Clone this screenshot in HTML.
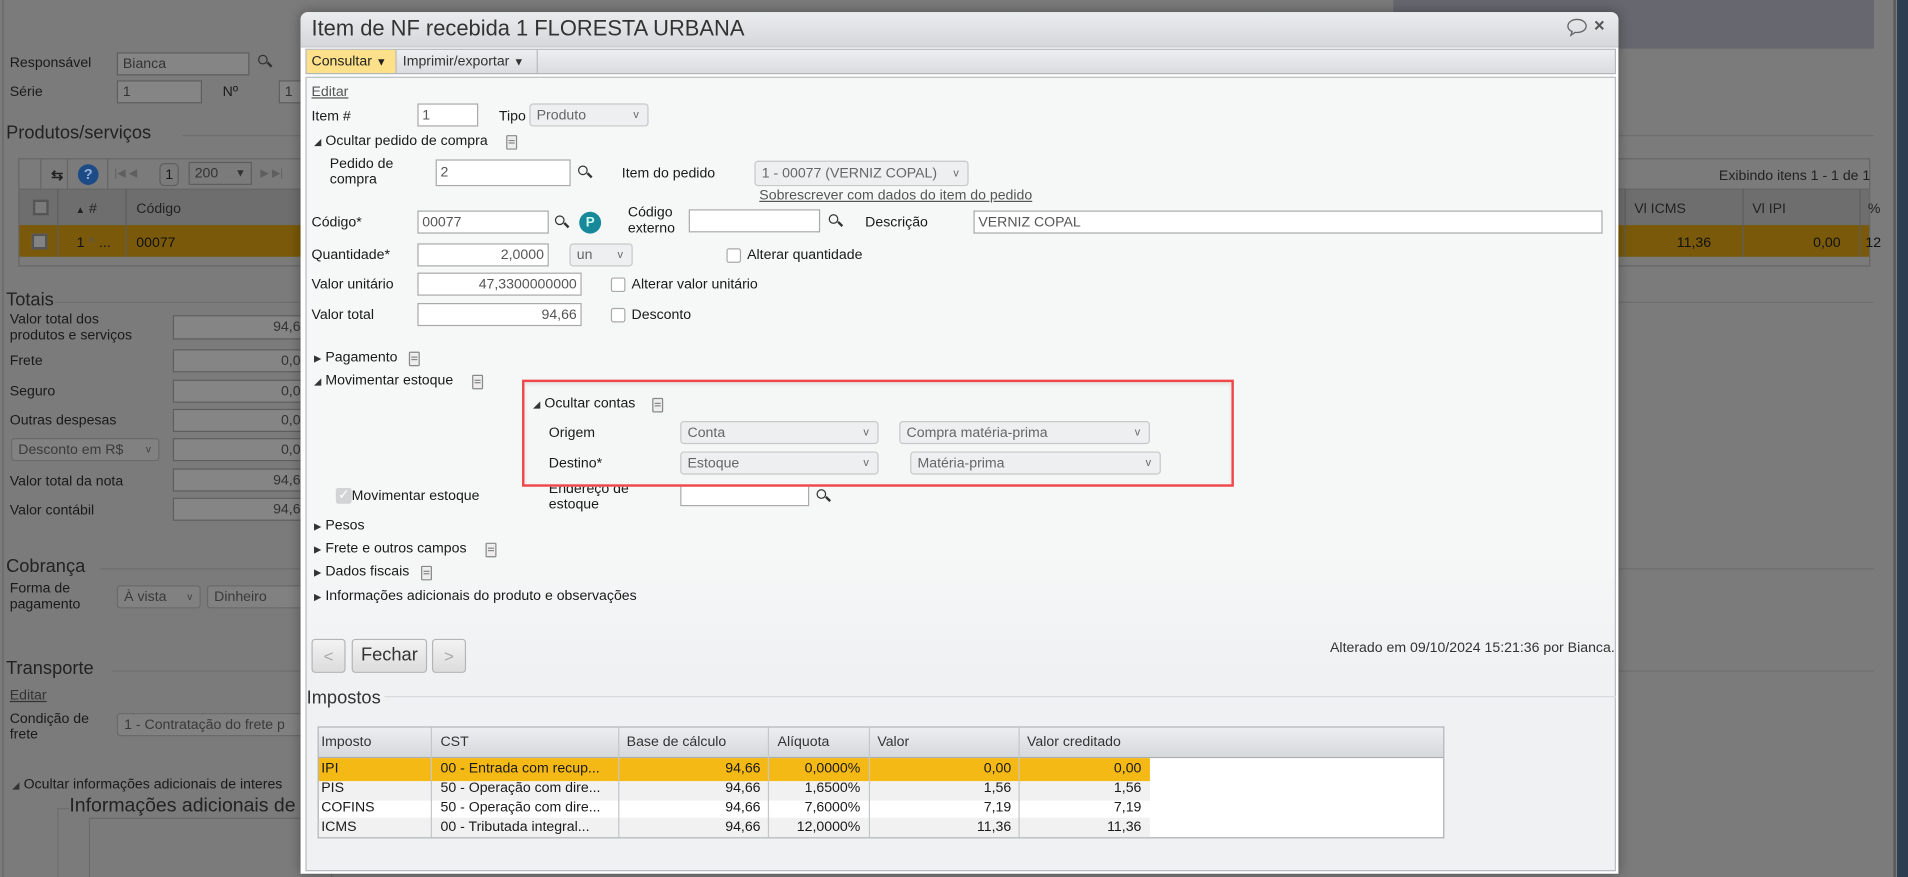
<!DOCTYPE html>
<html><head><meta charset="utf-8">
<style>
html,body{margin:0;padding:0;width:1908px;height:877px;overflow:hidden;background:#7b7b7b}
#w{position:absolute;left:0;top:0;width:1568px;height:721px;transform:scale(1.21684);transform-origin:0 0;font-family:"Liberation Sans",sans-serif;font-size:11.6px;color:#1a1a1a;background:#7b7b7b;overflow:hidden}
.a{position:absolute;white-space:nowrap}
.bin{position:absolute;box-sizing:border-box;background:#858585;border:1px solid #5e5e5e;color:#333;padding:0 4px;line-height:17px;font-size:11.6px;white-space:nowrap;overflow:hidden}
.bsel{position:absolute;box-sizing:border-box;background:#818181;border:1px solid #6a6a6a;border-radius:3px;color:#3a3a3a;padding:0 5px;line-height:17px;font-size:11.6px;white-space:nowrap;overflow:hidden}
.in{position:absolute;box-sizing:border-box;background:#fff;border:1px solid #aaa;color:#555;padding:0 3px;line-height:17px;font-size:11.6px;white-space:nowrap;overflow:hidden;height:19px}
.r{text-align:right}
.sel{position:absolute;box-sizing:border-box;background:#eeeff0;border:1px solid #c8c8c8;border-radius:3px;color:#666;padding:0 5px;line-height:17px;font-size:11.6px;white-space:nowrap;height:19px}
.sel:after{content:"v";position:absolute;right:7px;top:0;font-size:9px;color:#666}
.cb{position:absolute;width:12px;height:12px;box-sizing:border-box;border:1px solid #aaa;border-radius:2px;background:#fff}
.doc{position:absolute;width:7px;height:10px;border:1px solid #888;border-radius:1px;background:#eee}
.doc:before{content:"";position:absolute;left:1px;top:3px;width:5px;height:1px;background:#888;box-shadow:0 2px 0 #888}
.tri{font-size:8px;color:#333}
.lens{position:absolute;width:6px;height:6px;border:1.5px solid #333;border-radius:50%}
.lens:after{content:"";position:absolute;left:6px;top:6px;width:2px;height:5px;background:#333;transform:rotate(-45deg);transform-origin:0 0}
.sect{font-size:15px;color:#222}
.btn{position:absolute;box-sizing:border-box;border:1px solid #b5b5b5;border-radius:3px;background:linear-gradient(#f3f3f3,#dcdcdc);text-align:center;color:#333}
</style></head><body><div id="w">
<div class="a" style="left:1145px;top:0;width:395px;height:40px;background:#67676f"></div>
<div class="a" style="left:1556px;top:0;width:2px;height:721px;background:#5a5a5a"></div>
<div class="a" style="left:1559px;top:0;width:9px;height:721px;background:#2e3d52"></div>
<div class="a" style="left:2px;top:0;width:1px;height:721px;background:#666"></div>

<div class="a" style="left:8px;top:45px">Responsável</div>
<div class="bin" style="left:96px;top:43px;width:109px;height:19px">Bianca</div>
<div class="lens" style="left:212px;top:45px"></div>
<div class="a" style="left:8px;top:69px">Série</div>
<div class="bin" style="left:96px;top:66px;width:70px;height:19px">1</div>
<div class="a" style="left:183px;top:69px">Nº</div>
<div class="bin" style="left:229px;top:66px;width:30px;height:19px">1</div>

<div class="a sect" style="left:5px;top:101px">Produtos/serviços</div>
<div class="a" style="left:150px;top:111px;width:1390px;height:1px;background:#6e6e6e"></div>
<div class="a" style="left:15px;top:130px;width:1522px;height:89px;border:1px solid #666;box-sizing:border-box;background:#7b7b7b"></div>
<div class="a" style="left:33px;top:131px;width:1px;height:24px;background:#666"></div>
<div class="a" style="left:42px;top:137px;font-size:12px;font-weight:bold;color:#222">⇆</div>
<div class="a" style="left:55px;top:131px;width:1px;height:24px;background:#666"></div>
<div class="a" style="left:64px;top:135px;width:17px;height:17px;border-radius:50%;background:#1d4b86;color:#8fb0d8;font-weight:bold;text-align:center;font-size:12px;line-height:17px">?</div>
<div class="a" style="left:88px;top:131px;width:1px;height:24px;background:#666"></div>
<div class="a" style="left:94px;top:137px;color:#5f5f5f;font-size:9px">|◀ ◀</div>
<div class="a" style="left:131px;top:134px;width:16px;height:19px;border:1px solid #5f5f5f;border-radius:4px;box-sizing:border-box;text-align:center;line-height:17px">1</div>
<div class="bin" style="left:155px;top:133px;width:52px;height:19px;background:#7b7b7b">200 <span style="position:absolute;right:4px;font-size:9px">▼</span></div>
<div class="a" style="left:214px;top:137px;color:#5f5f5f;font-size:9px">▶ ▶|</div>
<div class="a" style="right:31px;top:138px;color:#222">Exibindo itens 1 - 1 de 1</div>
<div class="a" style="left:16px;top:155px;width:1520px;height:30px;background:#6e6e6e;border-top:1px solid #666"></div>
<div class="a" style="left:47px;top:155px;width:1px;height:56px;background:#5e5e5e"></div>
<div class="a" style="left:103px;top:155px;width:1px;height:56px;background:#5e5e5e"></div>
<div class="a" style="left:1335px;top:155px;width:1px;height:56px;background:#5e5e5e"></div>
<div class="a" style="left:1432px;top:155px;width:1px;height:56px;background:#5e5e5e"></div>
<div class="a" style="left:1528px;top:155px;width:1px;height:56px;background:#5e5e5e"></div>
<div class="a" style="left:27px;top:164px;width:13px;height:13px;border:2px solid #555;box-sizing:border-box;background:#7b7b7b"></div>
<div class="a" style="left:62px;top:165px;color:#222"><span style="font-size:8px">▲</span> #</div>
<div class="a" style="left:112px;top:165px;color:#222">Código</div>
<div class="a" style="left:1343px;top:165px;color:#222">Vl ICMS</div>
<div class="a" style="left:1440px;top:165px;color:#222">Vl IPI</div>
<div class="a" style="left:1535px;top:165px;color:#222">%</div>
<div class="a" style="left:16px;top:185px;width:1520px;height:26px;background:#7a5a0a"></div>
<div class="a" style="left:47px;top:185px;width:1px;height:26px;background:#5e5e5e"></div>
<div class="a" style="left:103px;top:185px;width:1px;height:26px;background:#5e5e5e"></div>
<div class="a" style="left:1335px;top:185px;width:1px;height:26px;background:#5e5e5e"></div>
<div class="a" style="left:1432px;top:185px;width:1px;height:26px;background:#5e5e5e"></div>
<div class="a" style="left:1528px;top:185px;width:1px;height:26px;background:#5e5e5e"></div>
<div class="a" style="left:26px;top:192px;width:13px;height:13px;border:2px solid #555;box-sizing:border-box;background:#838383"></div>
<div class="a" style="left:63px;top:193px;color:#111">1 <span style="color:#555">^</span> ...</div>
<div class="a" style="left:112px;top:193px;color:#111">00077</div>
<div class="a" style="left:1378px;top:193px;color:#111">11,36</div>
<div class="a" style="left:1490px;top:193px;color:#111">0,00</div>
<div class="a" style="left:1533px;top:193px;color:#111">12</div>

<div class="a sect" style="left:5px;top:238px">Totais</div>
<div class="a" style="left:45px;top:248px;width:1495px;height:1px;background:#6e6e6e"></div>
<div class="a" style="left:8px;top:256px;line-height:13px">Valor total dos<br>produtos e serviços</div>
<div class="bin r" style="left:142px;top:259px;width:110px;height:20px">94,6</div>
<div class="a" style="left:8px;top:290px">Frete</div>
<div class="bin r" style="left:142px;top:287px;width:110px;height:19px">0,0</div>
<div class="a" style="left:8px;top:315px">Seguro</div>
<div class="bin r" style="left:142px;top:312px;width:110px;height:19px">0,0</div>
<div class="a" style="left:8px;top:339px">Outras despesas</div>
<div class="bin r" style="left:142px;top:336px;width:110px;height:19px">0,0</div>
<div class="bsel" style="left:9px;top:360px;width:122px;height:19px">Desconto em R$ <span style="position:absolute;right:6px;font-size:8px">v</span></div>
<div class="bin r" style="left:142px;top:360px;width:110px;height:19px">0,0</div>
<div class="a" style="left:8px;top:389px">Valor total da nota</div>
<div class="bin r" style="left:142px;top:385px;width:110px;height:19px">94,6</div>
<div class="a" style="left:8px;top:413px">Valor contábil</div>
<div class="bin r" style="left:142px;top:409px;width:110px;height:19px">94,6</div>

<div class="a sect" style="left:5px;top:457px">Cobrança</div>
<div class="a" style="left:82px;top:467px;width:1458px;height:1px;background:#6e6e6e"></div>
<div class="a" style="left:8px;top:477px;line-height:13px">Forma de<br>pagamento</div>
<div class="bsel" style="left:96px;top:481px;width:69px;height:19px">À vista <span style="position:absolute;right:6px;font-size:8px">v</span></div>
<div class="bsel" style="left:170px;top:481px;width:90px;height:19px">Dinheiro</div>

<div class="a sect" style="left:5px;top:541px">Transporte</div>
<div class="a" style="left:92px;top:551px;width:1448px;height:1px;background:#6e6e6e"></div>
<div class="a" style="left:8px;top:565px;text-decoration:underline;color:#333">Editar</div>
<div class="a" style="left:8px;top:584px;line-height:13px">Condição de<br>frete</div>
<div class="bsel" style="left:96px;top:586px;width:170px;height:19px">1 - Contratação do frete p</div>
<div class="a" style="left:10px;top:638px"><span class="tri">◢</span> Ocultar informações adicionais de interes</div>
<div class="a" style="left:47px;top:664px;width:1px;height:60px;background:#6e6e6e"></div>
<div class="a" style="left:47px;top:664px;width:10px;height:1px;background:#6e6e6e"></div>
<div class="a" style="left:57px;top:654px;font-size:16px;color:#222">Informações adicionais de in</div>
<div class="a" style="left:73px;top:672px;width:200px;height:60px;border:1px solid #6a6a6a;box-sizing:border-box"></div>

<!-- modal -->
<div class="a" style="left:247px;top:10px;width:1083px;height:708px;background:#fff;border-radius:6px 6px 0 0;box-shadow:0 0 10px rgba(0,0,0,.35)"></div>
<div class="a" style="left:247px;top:10px;width:1083px;height:28px;background:linear-gradient(#ebecee,#d5d7da);border-radius:6px 6px 0 0;border-bottom:1px solid #b9bcc0"></div>
<div class="a" style="left:256px;top:13px;font-size:18px;color:#333">Item de NF recebida 1 FLORESTA URBANA</div>
<svg class="a" style="left:1286px;top:14px" width="20" height="17" viewBox="0 0 20 17"><path d="M10 2C5.5 2 2.5 4.6 2.5 7.5c0 2 1.4 3.6 3.4 4.4L5 15l3.4-2.4c.5.1 1 .1 1.6.1 4.5 0 7.5-2.4 7.5-5.3S14.5 2 10 2z" fill="none" stroke="#666" stroke-width="1.1"/></svg>
<div class="a" style="left:1310px;top:13px;font-size:15px;font-weight:bold;color:#555">×</div>
<div class="a" style="left:251px;top:40px;width:1077px;height:21px;box-sizing:border-box;border:1px solid #b3b6ba;background:linear-gradient(#eceef0,#dadcdf)"></div>
<div class="a" style="left:252px;top:41px;width:73px;height:19px;background:#fde18a"></div>
<div class="a" style="left:256px;top:44px;color:#222">Consultar <span style="font-size:9px">▼</span></div>
<div class="a" style="left:325px;top:41px;width:1px;height:19px;background:#bbb"></div>
<div class="a" style="left:331px;top:44px;color:#333">Imprimir/exportar <span style="font-size:9px">▼</span></div>
<div class="a" style="left:441px;top:41px;width:1px;height:19px;background:#bbb"></div>

<div class="a" style="left:251px;top:63px;width:1077px;height:653px;box-sizing:border-box;border:1px solid #b8bbbf;background:linear-gradient(#f6f7f7 0%,#f6f7f7 60%,#f0f1f3 75%,#f0f1f3 100%)"></div>
<div class="a" style="left:256px;top:69px;text-decoration:underline;color:#555">Editar</div>
<div class="a" style="left:256px;top:89px">Item #</div>
<div class="in" style="left:343px;top:85px;width:50px">1</div>
<div class="a" style="left:410px;top:89px">Tipo</div>
<div class="sel" style="left:435px;top:85px;width:98px">Produto</div>
<div class="a" style="left:258px;top:109px"><span class="tri">◢</span> Ocultar pedido de compra</div>
<div class="doc" style="left:416px;top:111px"></div>
<div class="a" style="left:271px;top:128px;line-height:13px">Pedido de<br>compra</div>
<div class="in" style="left:358px;top:131px;width:111px;height:22px;line-height:20px">2</div>
<div class="lens" style="left:475px;top:136px"></div>
<div class="a" style="left:511px;top:136px">Item do pedido</div>
<div class="sel" style="left:620px;top:132px;width:176px;height:21px;line-height:19px">1 - 00077 (VERNIZ COPAL)</div>
<div class="a" style="left:624px;top:154px;text-decoration:underline;color:#555">Sobrescrever com dados do item do pedido</div>

<div class="a" style="left:256px;top:176px">Código*</div>
<div class="in" style="left:343px;top:173px;width:108px">00077</div>
<div class="lens" style="left:456px;top:177px"></div>
<div class="a" style="left:476px;top:174px;width:18px;height:18px;border-radius:50%;background:#17899a;color:#cfe;text-align:center;font-size:11px;line-height:18px;font-weight:bold">P</div>
<div class="a" style="left:516px;top:168px;line-height:13px">Código<br>externo</div>
<div class="in" style="left:566px;top:172px;width:108px">&nbsp;</div>
<div class="lens" style="left:681px;top:176px"></div>
<div class="a" style="left:711px;top:176px">Descrição</div>
<div class="in" style="left:800px;top:173px;width:517px">VERNIZ COPAL</div>

<div class="a" style="left:256px;top:203px">Quantidade*</div>
<div class="in r" style="left:343px;top:200px;width:108px">2,0000</div>
<div class="sel" style="left:468px;top:200px;width:52px">un</div>
<div class="cb" style="left:597px;top:204px"></div>
<div class="a" style="left:614px;top:203px">Alterar quantidade</div>
<div class="a" style="left:256px;top:227px">Valor unitário</div>
<div class="in r" style="left:343px;top:224px;width:135px">47,3300000000</div>
<div class="cb" style="left:502px;top:228px"></div>
<div class="a" style="left:519px;top:227px">Alterar valor unitário</div>
<div class="a" style="left:256px;top:252px">Valor total</div>
<div class="in r" style="left:343px;top:249px;width:135px">94,66</div>
<div class="cb" style="left:502px;top:253px"></div>
<div class="a" style="left:519px;top:252px">Desconto</div>

<div class="a" style="left:258px;top:287px"><span class="tri">▶</span> Pagamento</div>
<div class="doc" style="left:336px;top:289px"></div>
<div class="a" style="left:258px;top:306px"><span class="tri">◢</span> Movimentar estoque</div>
<div class="doc" style="left:388px;top:308px"></div>

<div class="a" style="left:451px;top:395px;line-height:13px">Endereço de<br>estoque</div>
<div class="in" style="left:559px;top:398px;width:106px;height:18px">&nbsp;</div>
<div class="lens" style="left:671px;top:402px"></div>
<div class="a" style="left:429px;top:312px;width:585px;height:88px;box-sizing:border-box;border:2px solid #f0484a;background:#f5f6f6;box-shadow:inset 0 2px 3px rgba(0,0,0,.08)"></div>
<div class="a" style="left:438px;top:325px"><span class="tri">◢</span> Ocultar contas</div>
<div class="doc" style="left:536px;top:327px"></div>
<div class="a" style="left:451px;top:349px">Origem</div>
<div class="sel" style="left:559px;top:346px;width:163px">Conta</div>
<div class="sel" style="left:739px;top:346px;width:206px">Compra matéria-prima</div>
<div class="a" style="left:451px;top:374px">Destino*</div>
<div class="sel" style="left:559px;top:371px;width:163px">Estoque</div>
<div class="sel" style="left:748px;top:371px;width:206px">Matéria-prima</div>

<div class="a" style="left:276px;top:401px;width:13px;height:13px;border-radius:2px;background:#d2d4d6;color:#fff;font-size:11px;line-height:13px;text-align:center">✓</div>
<div class="a" style="left:289px;top:401px">Movimentar estoque</div>

<div class="a" style="left:258px;top:425px"><span class="tri">▶</span> Pesos</div>
<div class="a" style="left:258px;top:444px"><span class="tri">▶</span> Frete e outros campos</div>
<div class="doc" style="left:399px;top:446px"></div>
<div class="a" style="left:258px;top:463px"><span class="tri">▶</span> Dados fiscais</div>
<div class="doc" style="left:346px;top:465px"></div>
<div class="a" style="left:258px;top:483px"><span class="tri">▶</span> Informações adicionais do produto e observações</div>

<div class="btn" style="left:256px;top:525px;width:28px;height:28px;line-height:26px;color:#aaa;font-size:14px">&lt;</div>
<div class="btn" style="left:289px;top:525px;width:62px;height:28px;line-height:26px;font-size:15px">Fechar</div>
<div class="btn" style="left:355px;top:525px;width:28px;height:28px;line-height:26px;color:#aaa;font-size:14px">&gt;</div>
<div class="a" style="right:241px;top:526px;color:#333">Alterado em 09/10/2024 15:21:36 por Bianca.</div>

<div class="a" style="left:252px;top:565px;font-size:15px;color:#333">Impostos</div>
<div class="a" style="left:316px;top:572px;width:1012px;height:1px;background:#d8dadc"></div>
<div class="a" style="left:261px;top:597px;width:926px;height:92px;box-sizing:border-box;border:1px solid #a9acb0;background:#fff"></div>
<div class="a" style="left:262px;top:598px;width:924px;height:24px;background:linear-gradient(#eceef0,#d6d9dc);border-bottom:1px solid #a9acb0"></div>
<div class="a" style="left:262px;top:623px;width:683px;height:19px;background:#f5b915"></div>
<div class="a" style="left:262px;top:642px;width:683px;height:16px;background:#f1f1f1"></div>
<div class="a" style="left:262px;top:672px;width:683px;height:16px;background:#f1f1f1"></div>
<div class="a" style="left:354px;top:598px;width:1px;height:90px;background:#c4c6c9"></div>
<div class="a" style="left:508px;top:598px;width:1px;height:90px;background:#c4c6c9"></div>
<div class="a" style="left:631px;top:598px;width:1px;height:90px;background:#c4c6c9"></div>
<div class="a" style="left:714px;top:598px;width:1px;height:90px;background:#c4c6c9"></div>
<div class="a" style="left:837px;top:598px;width:1px;height:90px;background:#c4c6c9"></div>
<div class="a" style="left:264px;top:603px;color:#333">Imposto</div>
<div class="a" style="left:362px;top:603px;color:#333">CST</div>
<div class="a" style="left:515px;top:603px;color:#333">Base de cálculo</div>
<div class="a" style="left:639px;top:603px;color:#333">Alíquota</div>
<div class="a" style="left:721px;top:603px;color:#333">Valor</div>
<div class="a" style="left:844px;top:603px;color:#333">Valor creditado</div>

<div class="a" style="left:264px;top:625px">IPI</div><div class="a" style="left:362px;top:625px">00 - Entrada com recup...</div><div class="a" style="right:943px;top:625px">94,66</div><div class="a" style="right:861px;top:625px">0,0000%</div><div class="a" style="right:737px;top:625px">0,00</div><div class="a" style="right:630px;top:625px">0,00</div>
<div class="a" style="left:264px;top:641px">PIS</div><div class="a" style="left:362px;top:641px">50 - Operação com dire...</div><div class="a" style="right:943px;top:641px">94,66</div><div class="a" style="right:861px;top:641px">1,6500%</div><div class="a" style="right:737px;top:641px">1,56</div><div class="a" style="right:630px;top:641px">1,56</div>
<div class="a" style="left:264px;top:657px">COFINS</div><div class="a" style="left:362px;top:657px">50 - Operação com dire...</div><div class="a" style="right:943px;top:657px">94,66</div><div class="a" style="right:861px;top:657px">7,6000%</div><div class="a" style="right:737px;top:657px">7,19</div><div class="a" style="right:630px;top:657px">7,19</div>
<div class="a" style="left:264px;top:673px">ICMS</div><div class="a" style="left:362px;top:673px">00 - Tributada integral...</div><div class="a" style="right:943px;top:673px">94,66</div><div class="a" style="right:861px;top:673px">12,0000%</div><div class="a" style="right:737px;top:673px">11,36</div><div class="a" style="right:630px;top:673px">11,36</div>
</div></body></html>
